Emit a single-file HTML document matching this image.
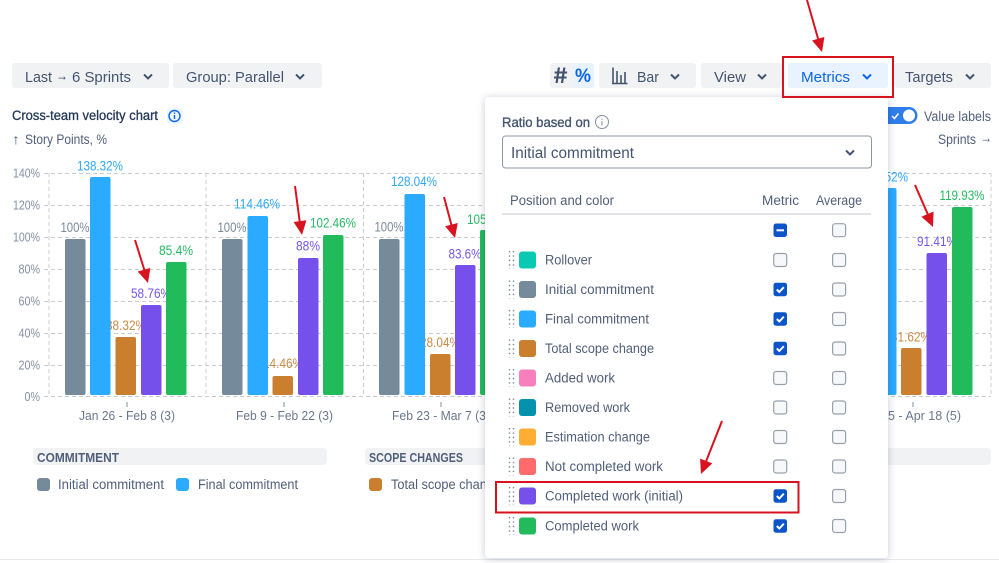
<!DOCTYPE html>
<html><head><meta charset="utf-8"><title>Cross-team velocity chart</title>
<style>
html,body{margin:0;padding:0;background:#fff;width:999px;height:563px;overflow:hidden}
svg{display:block;font-family:"Liberation Sans",sans-serif;filter:blur(.25px)}
.btn{font-size:15px;fill:#44546f}
.y{font-size:13px;fill:#8590a2;text-anchor:end}
.x{font-size:13px;fill:#6b778c;text-anchor:middle}
.v{font-size:14px;text-anchor:middle}
.r{font-size:13.500px;fill:#505f79}
.h{font-size:13.500px;fill:#505f79}
.cv{fill:none;stroke:#44546f;stroke-width:2}
.un{fill:#f7f8f9;stroke:#98a0ab;stroke-width:1.2}
.on{fill:#0c55c8}
.ck{fill:none;stroke:#fff;stroke-width:2}
.ar{stroke:#d8131f;stroke-width:2}
.grip{stroke:#7a8699;stroke-width:1.4;stroke-dasharray:1.4 3}
</style></head><body>
<svg width="999" height="563" viewBox="0 0 999 563" xmlns="http://www.w3.org/2000/svg">
<defs><filter id="sh" x="-10%" y="-10%" width="120%" height="120%"><feDropShadow dx="0" dy="1" stdDeviation="4" flood-color="#091e42" flood-opacity=".22"/></filter></defs>
<rect width="999" height="563" fill="#fff"/>
<rect x="0" y="559" width="999" height="1" fill="#e8eaed"/>

<!-- toolbar -->
<rect x="12" y="63" width="157" height="25" rx="3" fill="#f1f2f4"/>
<text class="btn" x="25" y="82" textLength="27" lengthAdjust="spacingAndGlyphs">Last</text>
<text class="btn" x="56" y="80.500" textLength="12" lengthAdjust="spacingAndGlyphs">→</text>
<text class="btn" x="72" y="82" textLength="59" lengthAdjust="spacingAndGlyphs">6 Sprints</text>
<path class="cv" d="M144 74.500l4 4 4-4"/>
<rect x="173" y="63" width="149" height="25" rx="3" fill="#f1f2f4"/>
<text class="btn" x="186" y="82" textLength="98" lengthAdjust="spacingAndGlyphs">Group: Parallel</text>
<path class="cv" d="M296 74.500l4 4 4-4"/>

<rect x="550" y="63" width="44" height="25" rx="3" fill="#f1f2f4"/>
<rect x="573" y="63" width="21" height="25" rx="3" fill="#e9f2ff"/>
<text x="553" y="83" font-size="21" font-weight="700" fill="#44546f" textLength="15" lengthAdjust="spacingAndGlyphs" style="font-family:'Noto Sans CJK JP',sans-serif">#</text>
<text x="575" y="82" font-size="19" font-weight="700" fill="#0c66e4" textLength="16" lengthAdjust="spacingAndGlyphs">%</text>

<rect x="599" y="63" width="97" height="25" rx="3" fill="#f1f2f4"/>
<path d="M612 83.500h15.500M613 67.500v16M617 71v12.500M621 75v8.500M625 72v11.500" fill="none" stroke="#44546f" stroke-width="1.600"/>
<text class="btn" x="637" y="82" textLength="22" lengthAdjust="spacingAndGlyphs">Bar</text>
<path class="cv" d="M671 74.500l4 4 4-4"/>
<rect x="701" y="63" width="81" height="25" rx="3" fill="#f1f2f4"/>
<text class="btn" x="714" y="82" textLength="32" lengthAdjust="spacingAndGlyphs">View</text>
<path class="cv" d="M758 74.500l4 4 4-4"/>
<rect x="788" y="63" width="100" height="25" rx="3" fill="#e9f2ff"/>
<text class="btn" x="801" y="82" textLength="49" lengthAdjust="spacingAndGlyphs" style="fill:#0c66e4">Metrics</text>
<path class="cv" style="stroke:#0c66e4" d="M863 74.500l4 4 4-4"/>
<rect x="894" y="63" width="97" height="25" rx="3" fill="#f1f2f4"/>
<text class="btn" x="905" y="82" textLength="48" lengthAdjust="spacingAndGlyphs">Targets</text>
<path class="cv" d="M966 74.500l4 4 4-4"/>

<!-- chart header -->
<text x="12" y="120" font-size="13.500" fill="#253858" stroke="#253858" stroke-width=".3" textLength="146" lengthAdjust="spacingAndGlyphs">Cross-team velocity chart</text>
<rect x="167" y="108" width="16" height="16" rx="3" fill="#eef5ff"/>
<circle cx="174.500" cy="116" r="5.500" fill="none" stroke="#0c66e4" stroke-width="1.400"/>
<path d="M174.500 115v4M174.500 112.500v1.400" stroke="#0c66e4" stroke-width="1.400"/>
<text x="12" y="144" font-size="14" fill="#505f79" textLength="8" lengthAdjust="spacingAndGlyphs">↑</text>
<text x="25" y="144" font-size="13.500" fill="#505f79" textLength="82" lengthAdjust="spacingAndGlyphs">Story Points, %</text>

<path d="M888 107h21a8.500 8.500 0 0 1 0 17h-21z" fill="#2f7de8"/>
<circle cx="909" cy="115.500" r="6" fill="#fff"/>
<path d="M892 116l2.500 2.500 4-5" fill="none" stroke="#fff" stroke-width="1.500"/>
<text x="924" y="121" font-size="13.500" fill="#505f79" textLength="67" lengthAdjust="spacingAndGlyphs">Value labels</text>
<text x="938" y="144" font-size="13.500" fill="#505f79" textLength="38" lengthAdjust="spacingAndGlyphs">Sprints</text>
<text x="980" y="142.500" font-size="14" fill="#505f79" textLength="12" lengthAdjust="spacingAndGlyphs">→</text>

<!-- y labels -->
<text class="y" x="40" y="177.500" textLength="27" lengthAdjust="spacingAndGlyphs">140%</text>
<text class="y" x="40" y="209.500" textLength="27" lengthAdjust="spacingAndGlyphs">120%</text>
<text class="y" x="40" y="241.500" textLength="27" lengthAdjust="spacingAndGlyphs">100%</text>
<text class="y" x="40" y="273.500" textLength="21.500" lengthAdjust="spacingAndGlyphs">80%</text>
<text class="y" x="40" y="305.500" textLength="21.500" lengthAdjust="spacingAndGlyphs">60%</text>
<text class="y" x="40" y="337.500" textLength="21.500" lengthAdjust="spacingAndGlyphs">40%</text>
<text class="y" x="40" y="369.500" textLength="21.500" lengthAdjust="spacingAndGlyphs">20%</text>
<text class="y" x="40" y="401" textLength="15.500" lengthAdjust="spacingAndGlyphs">0%</text>

<!-- grid -->
<path d="M44 173.500H991M44 205.500H991M44 237.500H991M44 269.500H991M44 301.500H991M44 333.500H991M44 365.500H991M44 396.500H991M49 173V397M206 173V397M363.500 173V397M521 173V397M678 173V397M835 173V397M991 173V397" fill="none" stroke="#c8ccd1" stroke-width="1" stroke-dasharray="4 3"/>

<!-- value labels (behind bars) -->
<g class="v">
<text x="75" y="232" fill="#7a8a99" textLength="29" lengthAdjust="spacingAndGlyphs">100%</text>
<text x="100" y="170.500" fill="#2fa8f8" textLength="46" lengthAdjust="spacingAndGlyphs">138.32%</text>
<text x="126" y="330" fill="#cc8a45" textLength="40" lengthAdjust="spacingAndGlyphs">38.32%</text>
<text x="151" y="298" fill="#7457e8" textLength="40" lengthAdjust="spacingAndGlyphs">58.76%</text>
<text x="176" y="255" fill="#27b864" textLength="34" lengthAdjust="spacingAndGlyphs">85.4%</text>

<text x="232" y="232" fill="#7a8a99" textLength="29" lengthAdjust="spacingAndGlyphs">100%</text>
<text x="257" y="208.500" fill="#2fa8f8" textLength="46" lengthAdjust="spacingAndGlyphs">114.46%</text>
<text x="283" y="368" fill="#cc8a45" textLength="40" lengthAdjust="spacingAndGlyphs">14.46%</text>
<text x="308" y="250.500" fill="#7457e8" textLength="24" lengthAdjust="spacingAndGlyphs">88%</text>
<text x="333" y="227.500" fill="#27b864" textLength="46" lengthAdjust="spacingAndGlyphs">102.46%</text>

<text x="389" y="231.500" fill="#7a8a99" textLength="29" lengthAdjust="spacingAndGlyphs">100%</text>
<text x="414" y="186" fill="#2fa8f8" textLength="46" lengthAdjust="spacingAndGlyphs">128.04%</text>
<text x="440" y="347" fill="#cc8a45" textLength="40" lengthAdjust="spacingAndGlyphs">28.04%</text>
<text x="465" y="258.500" fill="#7457e8" textLength="33" lengthAdjust="spacingAndGlyphs">83.6%</text>
<text x="490" y="224" fill="#27b864" textLength="46" lengthAdjust="spacingAndGlyphs">105.04%</text>

<text x="885" y="181.500" fill="#2fa8f8" textLength="46" lengthAdjust="spacingAndGlyphs">132.52%</text>
<text x="911" y="341.500" fill="#cc8a45" textLength="40" lengthAdjust="spacingAndGlyphs">31.62%</text>
<text x="937" y="246" fill="#7457e8" textLength="40" lengthAdjust="spacingAndGlyphs">91.41%</text>
<text x="962" y="200" fill="#27b864" textLength="45" lengthAdjust="spacingAndGlyphs">119.93%</text>
</g>

<!-- bars -->
<g>
<rect x="65" y="239" width="20.500" height="156" rx="2" fill="#758a9b"/>
<rect x="90" y="177" width="20.500" height="218" rx="2" fill="#2aabff"/>
<rect x="115.500" y="337" width="20.500" height="58" rx="2" fill="#ca7f2f"/>
<rect x="141" y="305" width="20.500" height="90" rx="2" fill="#7650ea"/>
<rect x="166" y="262" width="20.500" height="133" rx="2" fill="#22bb5c"/>

<rect x="222" y="239" width="20.500" height="156" rx="2" fill="#758a9b"/>
<rect x="247.500" y="216" width="20.500" height="179" rx="2" fill="#2aabff"/>
<rect x="272.500" y="376" width="20.500" height="19" rx="2" fill="#ca7f2f"/>
<rect x="298" y="258" width="20.500" height="137" rx="2" fill="#7650ea"/>
<rect x="323" y="235" width="20.500" height="160" rx="2" fill="#22bb5c"/>

<rect x="379" y="239" width="20.500" height="156" rx="2" fill="#758a9b"/>
<rect x="404.500" y="194" width="20.500" height="201" rx="2" fill="#2aabff"/>
<rect x="430" y="354" width="20.500" height="41" rx="2" fill="#ca7f2f"/>
<rect x="455" y="265" width="20.500" height="130" rx="2" fill="#7650ea"/>
<rect x="480" y="230" width="20.500" height="165" rx="2" fill="#22bb5c"/>

<rect x="876" y="188" width="20.500" height="207" rx="2" fill="#2aabff"/>
<rect x="901" y="348" width="20.500" height="47" rx="2" fill="#ca7f2f"/>
<rect x="926.500" y="253" width="20.500" height="142" rx="2" fill="#7650ea"/>
<rect x="952" y="207" width="20.500" height="188" rx="2" fill="#22bb5c"/>
</g>

<!-- x labels -->
<path d="M127 402v5M284 402v5M441 402v5M913 402v5" stroke="#8590a2" stroke-width="1"/>
<text class="x" x="127" y="420" textLength="96" lengthAdjust="spacingAndGlyphs">Jan 26 - Feb 8 (3)</text>
<text class="x" x="284.500" y="420" textLength="97" lengthAdjust="spacingAndGlyphs">Feb 9 - Feb 22 (3)</text>
<text class="x" x="441" y="420" textLength="98" lengthAdjust="spacingAndGlyphs">Feb 23 - Mar 7 (3)</text>
<text class="x" x="913" y="420" textLength="96" lengthAdjust="spacingAndGlyphs">Apr 5 - Apr 18 (5)</text>

<!-- legend -->
<rect x="33" y="448" width="294" height="17" rx="4" fill="#f1f2f4"/>
<rect x="365" y="448" width="626" height="17" rx="4" fill="#f1f2f4"/>
<text x="37" y="462" font-size="12.500" font-weight="700" fill="#505f79" textLength="82" lengthAdjust="spacingAndGlyphs">COMMITMENT</text>
<text x="369" y="462" font-size="12.500" font-weight="700" fill="#505f79" textLength="94" lengthAdjust="spacingAndGlyphs">SCOPE CHANGES</text>
<rect x="37" y="478" width="13" height="13" rx="3" fill="#758a9b"/>
<text class="r" x="58" y="489" textLength="106" lengthAdjust="spacingAndGlyphs">Initial commitment</text>
<rect x="176" y="478" width="13" height="13" rx="3" fill="#2aabff"/>
<text class="r" x="198" y="489" textLength="100" lengthAdjust="spacingAndGlyphs">Final commitment</text>
<rect x="369" y="478" width="13" height="13" rx="3" fill="#ca7f2f"/>
<text class="r" x="391" y="489" textLength="110" lengthAdjust="spacingAndGlyphs">Total scope change</text>

<!-- popup -->
<rect x="485" y="97" width="403" height="461" rx="4" fill="#fff" filter="url(#sh)"/>
<text x="502" y="127" font-size="13.500" fill="#44546f" stroke="#44546f" stroke-width=".35" textLength="88" lengthAdjust="spacingAndGlyphs">Ratio based on</text>
<circle cx="602" cy="122" r="6.500" fill="none" stroke="#8590a2" stroke-width="1"/>
<path d="M602 121v4.500M602 118.500v1.400" stroke="#8590a2" stroke-width="1"/>
<rect x="502.500" y="136" width="369" height="32" rx="3" fill="#fff" stroke="#8d96a3" stroke-width="1"/>
<text x="511" y="158" font-size="15.500" fill="#44546f" textLength="123" lengthAdjust="spacingAndGlyphs">Initial commitment</text>
<path class="cv" d="M846 150.500l4 4 4-4"/>

<text class="h" x="510" y="205" textLength="104" lengthAdjust="spacingAndGlyphs">Position and color</text>
<text class="h" x="762" y="205" textLength="37" lengthAdjust="spacingAndGlyphs">Metric</text>
<text class="h" x="816" y="205" textLength="46" lengthAdjust="spacingAndGlyphs">Average</text>
<rect x="502" y="213" width="369" height="2" fill="#e2e4e8"/>

<!-- header checks -->
<rect x="773.500" y="223.500" width="13.500" height="13.500" rx="2.500" class="on"/>
<path d="M776.500 230.300h7.500" stroke="#fff" stroke-width="2"/>
<rect x="832.600" y="223.700" width="13" height="13" rx="2.500" class="un"/>

<!-- rows -->
<g>
<path class="grip" d="M509.500 251v18M513.500 251v18"/>
<rect x="519" y="251.500" width="17" height="17" rx="3" fill="#0ac9b3"/>
<text class="r" x="545" y="264.500" textLength="47" lengthAdjust="spacingAndGlyphs">Rollover</text>
<rect x="773.700" y="253.500" width="13" height="13" rx="2.500" class="un"/>
<rect x="832.600" y="253.500" width="13" height="13" rx="2.500" class="un"/>

<path class="grip" d="M509.500 280.500v18M513.500 280.500v18"/>
<rect x="519" y="281" width="17" height="17" rx="3" fill="#758a9b"/>
<text class="r" x="545" y="294" textLength="109" lengthAdjust="spacingAndGlyphs">Initial commitment</text>
<rect x="773.500" y="282.700" width="13.500" height="13.500" rx="2.500" class="on"/>
<path class="ck" d="M776.800 289.500l2.500 2.500 4.500-4.800"/>
<rect x="832.600" y="283" width="13" height="13" rx="2.500" class="un"/>

<path class="grip" d="M509.500 310v18M513.500 310v18"/>
<rect x="519" y="310.500" width="17" height="17" rx="3" fill="#2aabff"/>
<text class="r" x="545" y="323.500" textLength="104" lengthAdjust="spacingAndGlyphs">Final commitment</text>
<rect x="773.500" y="312.200" width="13.500" height="13.500" rx="2.500" class="on"/>
<path class="ck" d="M776.800 319l2.500 2.500 4.500-4.800"/>
<rect x="832.600" y="312.500" width="13" height="13" rx="2.500" class="un"/>

<path class="grip" d="M509.500 339.500v18M513.500 339.500v18"/>
<rect x="519" y="340" width="17" height="17" rx="3" fill="#ca7f2f"/>
<text class="r" x="545" y="353" textLength="109" lengthAdjust="spacingAndGlyphs">Total scope change</text>
<rect x="773.500" y="341.700" width="13.500" height="13.500" rx="2.500" class="on"/>
<path class="ck" d="M776.800 348.500l2.500 2.500 4.500-4.800"/>
<rect x="832.600" y="342" width="13" height="13" rx="2.500" class="un"/>

<path class="grip" d="M509.500 369v18M513.500 369v18"/>
<rect x="519" y="369.500" width="17" height="17" rx="3" fill="#f77fbb"/>
<text class="r" x="545" y="382.500" textLength="70" lengthAdjust="spacingAndGlyphs">Added work</text>
<rect x="773.700" y="371.500" width="13" height="13" rx="2.500" class="un"/>
<rect x="832.600" y="371.500" width="13" height="13" rx="2.500" class="un"/>

<path class="grip" d="M509.500 398.500v18M513.500 398.500v18"/>
<rect x="519" y="399" width="17" height="17" rx="3" fill="#0492ac"/>
<text class="r" x="545" y="412" textLength="85" lengthAdjust="spacingAndGlyphs">Removed work</text>
<rect x="773.700" y="401" width="13" height="13" rx="2.500" class="un"/>
<rect x="832.600" y="401" width="13" height="13" rx="2.500" class="un"/>

<path class="grip" d="M509.500 428v18M513.500 428v18"/>
<rect x="519" y="428.500" width="17" height="17" rx="3" fill="#ffad33"/>
<text class="r" x="545" y="441.500" textLength="105" lengthAdjust="spacingAndGlyphs">Estimation change</text>
<rect x="773.700" y="430.500" width="13" height="13" rx="2.500" class="un"/>
<rect x="832.600" y="430.500" width="13" height="13" rx="2.500" class="un"/>

<path class="grip" d="M509.500 457.500v18M513.500 457.500v18"/>
<rect x="519" y="458" width="17" height="17" rx="3" fill="#ff6b6b"/>
<text class="r" x="545" y="471" textLength="118" lengthAdjust="spacingAndGlyphs">Not completed work</text>
<rect x="773.700" y="460" width="13" height="13" rx="2.500" class="un"/>
<rect x="832.600" y="460" width="13" height="13" rx="2.500" class="un"/>

<path class="grip" d="M509.500 487v18M513.500 487v18"/>
<rect x="519" y="487.500" width="17" height="17" rx="3" fill="#7650ea"/>
<text class="r" x="545" y="500.500" textLength="138" lengthAdjust="spacingAndGlyphs">Completed work (initial)</text>
<rect x="773.500" y="489.200" width="13.500" height="13.500" rx="2.500" class="on"/>
<path class="ck" d="M776.800 496l2.500 2.500 4.500-4.800"/>
<rect x="832.600" y="489.500" width="13" height="13" rx="2.500" class="un"/>

<path class="grip" d="M509.500 517v18M513.500 517v18"/>
<rect x="519" y="517.500" width="17" height="17" rx="3" fill="#22bb5c"/>
<text class="r" x="545" y="530.500" textLength="94" lengthAdjust="spacingAndGlyphs">Completed work</text>
<rect x="773.500" y="519.200" width="13.500" height="13.500" rx="2.500" class="on"/>
<path class="ck" d="M776.800 526l2.500 2.500 4.500-4.800"/>
<rect x="832.600" y="519.500" width="13" height="13" rx="2.500" class="un"/>
</g>

<!-- annotations -->
<rect x="783" y="57" width="110" height="40" fill="none" stroke="#d8131f" stroke-width="2"/>
<rect x="496" y="482" width="302.500" height="30.500" fill="none" stroke="#d8131f" stroke-width="2"/>

<line class="ar" x1="807" y1="0" x2="819" y2="42"/><polygon points="822,52 824.400,37 812,40.500" fill="#d8131f"/>
<line class="ar" x1="135" y1="240" x2="145" y2="272"/><polygon points="148,283 150.300,268 137.700,271.500" fill="#d8131f"/>
<line class="ar" x1="295" y1="186" x2="300" y2="224"/><polygon points="302,235 306.400,220.300 293.600,222" fill="#d8131f"/>
<line class="ar" x1="444" y1="197" x2="452" y2="227"/><polygon points="455,238 457.700,223 445.100,226.200" fill="#d8131f"/>
<line class="ar" x1="915" y1="185" x2="929" y2="217"/><polygon points="933,227 933.600,211.500 921.400,216.700" fill="#d8131f"/>
<line class="ar" x1="722" y1="421" x2="705" y2="464"/><polygon points="701,474 712.300,463.400 700.100,458.600" fill="#d8131f"/>
</svg>
</body></html>
